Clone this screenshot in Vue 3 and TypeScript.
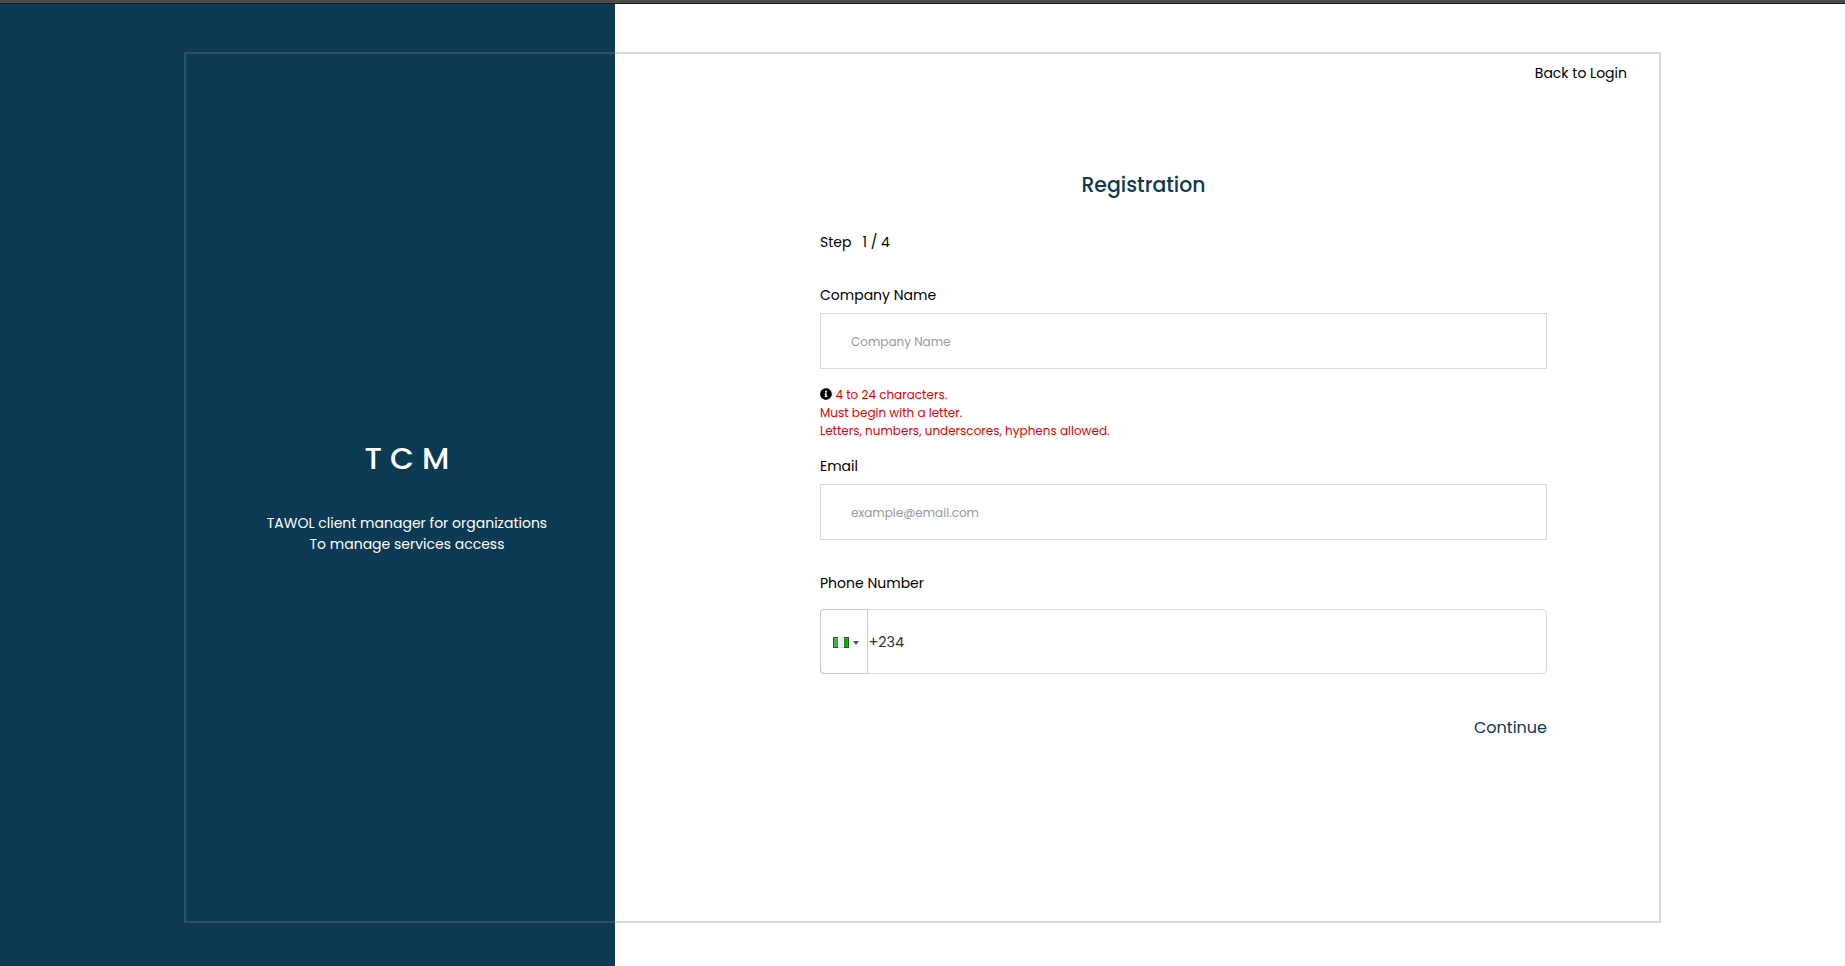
<script setup lang="ts">
import { ref } from 'vue'

const step = ref(1)
const totalSteps = 4
const company = ref('')
const email = ref('')
const phone = ref('+234')
const rules = ['Must begin with a letter.', 'Letters, numbers, underscores, hyphens allowed.']
</script>

<template>
  <div class="page">
    <div class="topbar"></div>
    <div class="columns">
      <aside class="brand">
        <h1>T C M</h1>
        <p>TAWOL client manager for organizations<br />To manage services access</p>
      </aside>
      <main class="content">
        <a class="back">Back to Login</a>
        <form class="form" @submit.prevent>
          <h2>Registration</h2>
          <div class="step"><span>Step</span><span>{{ step }} / {{ totalSteps }}</span></div>

          <label for="company">Company Name</label>
          <input id="company" v-model="company" class="field" type="text" placeholder="Company Name" />
          <p class="hint">
            <svg class="info" viewBox="0 0 512 512" aria-hidden="true">
              <path d="M256 8C119 8 8 119 8 256s111 248 248 248 248-111 248-248S393 8 256 8zm0 110c23 0 42 19 42 42s-19 42-42 42-42-19-42-42 19-42 42-42zm56 254c0 7-5 12-12 12h-88c-7 0-12-5-12-12v-24c0-7 5-12 12-12h12v-64h-12c-7 0-12-5-12-12v-24c0-7 5-12 12-12h64c7 0 12 5 12 12v100h12c7 0 12 5 12 12v24z" />
            </svg>
            <span>4 to 24 characters.</span>
            <template v-for="rule in rules" :key="rule"><br />{{ rule }}</template>
          </p>

          <label for="email">Email</label>
          <input id="email" v-model="email" class="field" type="text" placeholder="example@email.com" />

          <label class="phone-label" for="phone">Phone Number</label>
          <div class="phone">
            <div class="country">
              <svg class="flag" viewBox="0 0 16 11" shape-rendering="crispEdges" aria-hidden="true">
                <rect width="16" height="11" fill="#0b6a0b" />
                <rect x="1" y="1" width="4" height="9" fill="#5cc05c" />
                <rect x="2" y="2" width="3" height="8" fill="#3fae3f" />
                <rect x="5" width="6" height="11" fill="#dcdcdc" />
                <rect x="5" y="1" width="6" height="9" fill="#f3f3f3" />
                <rect x="11" y="1" width="4" height="9" fill="#2fae2f" />
                <rect x="11" y="2" width="3" height="8" fill="#169c16" />
              </svg>
              <span class="arrow"></span>
            </div>
            <input id="phone" v-model="phone" type="tel" />
          </div>

          <button class="continue" type="submit">Continue</button>
        </form>
      </main>
    </div>
    <div class="frame"></div>
  </div>
</template>

<style>
body {
  margin: 0;
}
</style>

<style scoped>
.page {
  position: relative;
  display: flex;
  flex-direction: column;
  box-sizing: border-box;
  height: 966px;
  overflow: hidden;
  background: #fff;
  color: #000;
  font: 400 14px/21px "Poppins", "Inter", sans-serif;
}
.page * {
  box-sizing: border-box;
}
.topbar {
  flex: none;
  height: 4px;
  background: #4d4d4d;
  border-bottom: 1px solid #1a1a1a;
}
.columns {
  display: flex;
  flex: 1;
}
.brand {
  flex: none;
  width: 615px;
  padding: 430px 0 0 199px;
  background: #0c3953;
  color: #fff;
  text-align: center;
}
.brand h1 {
  width: 416px;
  margin: 0 0 31px;
  font-size: 31px;
  line-height: 48px;
  font-weight: 500;
}
.brand p {
  width: 416px;
  margin: 0;
}
.content {
  flex: 1;
  display: flex;
  flex-direction: column;
  padding: 59px 218px 0 205px;
}
.back {
  align-self: flex-end;
  cursor: pointer;
}
.form {
  display: flex;
  flex-direction: column;
  align-items: stretch;
  width: 727px;
  margin-top: 86px;
}
.form h2 {
  margin: 0 80px 32px 0;
  color: #0c3953;
  font-size: 20.4px;
  line-height: 30px;
  font-weight: 500;
  text-align: center;
}
.step {
  display: flex;
  gap: 11px;
  margin-bottom: 32px;
}
label {
  margin-bottom: 7px;
}
.field {
  height: 56px;
  padding: 2px 30px 0;
  border: 1px solid #d9d9d9;
  outline: none;
  background: #fff;
  font: 400 12px/18px "Poppins", "Inter", sans-serif;
}
.field::placeholder {
  color: #999;
  opacity: 1;
}
.hint {
  margin: 17px 0 16px;
  color: #e60000;
  font-size: 12px;
  line-height: 18px;
}
.info {
  width: 12px;
  height: 12px;
  margin-right: 3.5px;
  fill: #000;
  vertical-align: -1px;
}
.phone-label {
  margin: 33px 0 15px;
}
.phone {
  display: flex;
  height: 65px;
  border: 1px solid #d9d9d9;
  border-radius: 5px;
  background: #fff;
}
.country {
  display: flex;
  align-items: center;
  gap: 4px;
  width: 48px;
  margin: -1px 0 -1px -1px;
  padding: 2px 0 0 12px;
  border: 1px solid #cacaca;
  border-radius: 3px 0 0 3px;
}
.flag {
  width: 16px;
  height: 11px;
}
.arrow {
  border: 3px solid transparent;
  border-top: 4px solid #555;
  border-bottom: 0;
}
.phone input {
  flex: 1;
  padding: 2px 0 0 0.5px;
  border: 0;
  outline: none;
  background: none;
  color: #333;
  font: inherit;
  font-size: 14.4px;
}
.continue {
  align-self: flex-end;
  margin-top: 42px;
  padding: 0;
  border: 0;
  background: none;
  color: #0c3953;
  font: 400 16px/24px "Poppins", "Inter", sans-serif;
}
.frame {
  position: absolute;
  inset: 52px 184px 43px;
  border: 2px solid rgba(133, 133, 133, 0.31);
  pointer-events: none;
}
</style>
